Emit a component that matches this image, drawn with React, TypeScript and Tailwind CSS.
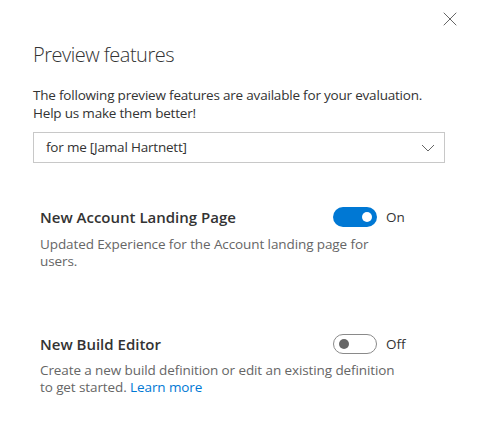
import { X } from "lucide-react";

interface FeatureProps {
  title: string;
  enabled: boolean;
  children: React.ReactNode;
}

function Toggle({ on }: { on: boolean }) {
  return (
    <div className="flex items-center gap-[9px]">
      <div
        className={`w-[44px] h-[20px] rounded-full flex items-center px-[5px] ${
          on
            ? "bg-[#0078d4] justify-end"
            : "bg-white border border-[#8a8a8a] justify-start"
        }`}
      >
        <div
          className={`w-[10px] h-[10px] rounded-full ${
            on ? "bg-white" : "bg-[#666666]"
          }`}
        />
      </div>
      <span className="text-[13.5px] text-[#333333]">{on ? "On" : "Off"}</span>
    </div>
  );
}

function Feature({ title, enabled, children }: FeatureProps) {
  return (
    <div className="pl-[7px]">
      <div className="flex items-center">
        <h3 className="w-[293px] text-[15px] font-semibold text-[#333333]">{title}</h3>
        <Toggle on={enabled} />
      </div>
      <p className="mt-[7px] w-[380px] text-[13.5px] leading-[17px] text-[#666666] tracking-[-0.1px]">
        {children}
      </p>
    </div>
  );
}

export default function App() {
  return (
    <div
      className="w-[478px] h-[438px] bg-white relative"
      style={{ fontFamily: '"Open Sans", "Noto Sans", sans-serif' }}
    >
      <button className="absolute top-[7px] left-[438px] text-[#666666]" aria-label="Close">
        <X className="w-[24px] h-[24px]" strokeWidth={1} />
      </button>

      <div className="px-[33px] pt-[41px]">
        <h2 className="text-[20px] font-light text-[#333333] leading-[28px] tracking-[-0.5px]">Preview features</h2>

        <p className="mt-[17px] text-[13.5px] leading-[18px] text-[#333333] tracking-[-0.2px]">
          The following preview features are available for your evaluation.
          <br />
          Help us make them better!
        </p>

        <div className="mt-[10px] h-[31px] w-[412px] border border-[#c8c8c8] flex items-center justify-between pl-[12px] pr-[9px]">
          <span className="text-[13.5px] text-[#333333] tracking-[-0.2px]">for me [Jamal Hartnett]</span>
          <svg width="14" height="8" viewBox="0 0 14 8" fill="none" className="text-[#666666]">
            <path d="M1 1 L7 7 L13 1" stroke="currentColor" strokeWidth="1" />
          </svg>
        </div>

        <div className="mt-[43px] flex flex-col gap-[63px]">
          <Feature title="New Account Landing Page" enabled>
            Updated Experience for the Account landing page for
            <br />
            users.
          </Feature>
          <Feature title="New Build Editor" enabled={false}>
            Create a new build definition or edit an existing definition
            <br />
            to get started.{" "}
            <a className="text-[#0078d4]" href="#">Learn more</a>
          </Feature>
        </div>
      </div>
    </div>
  );
}
